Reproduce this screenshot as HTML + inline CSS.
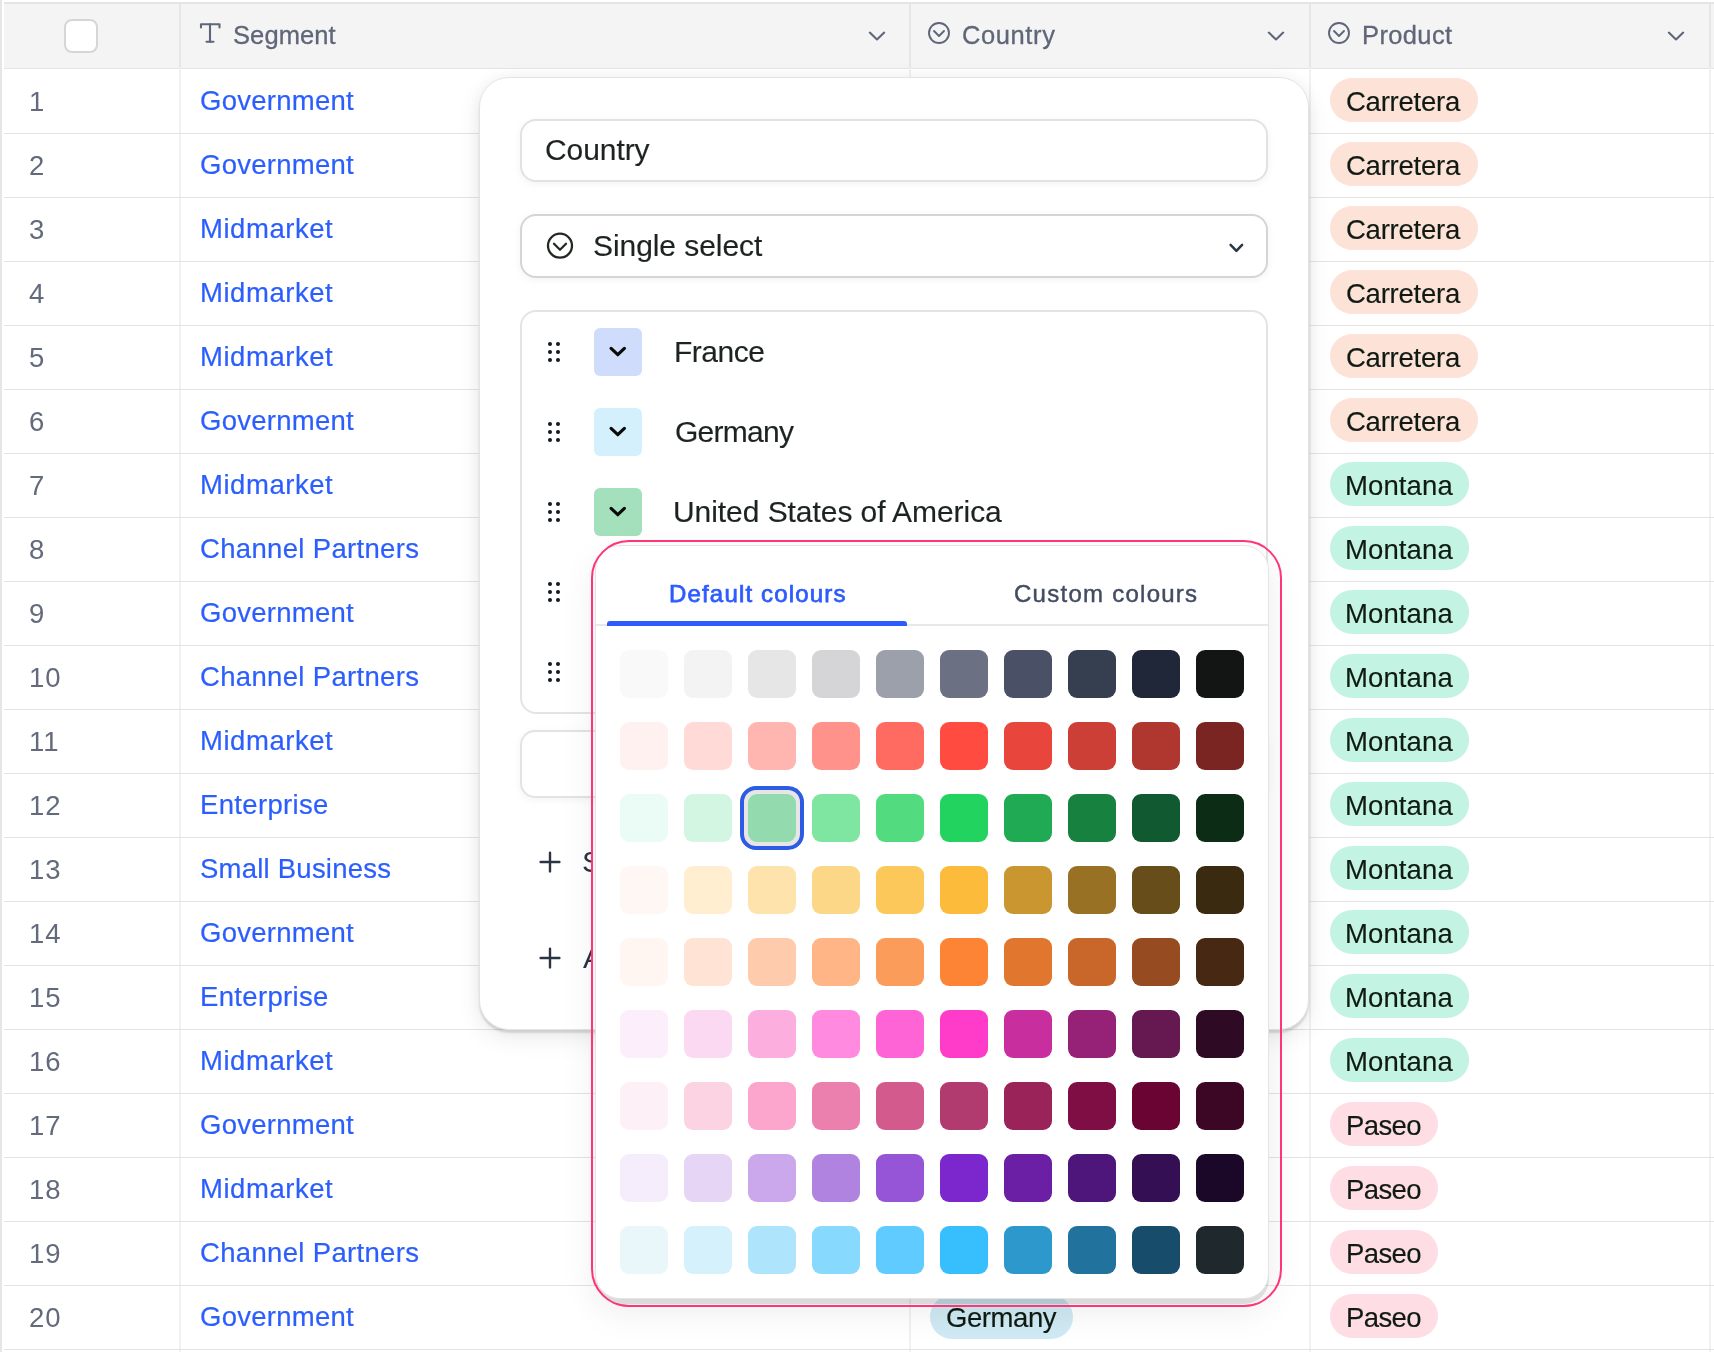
<!DOCTYPE html>
<html><head><meta charset="utf-8">
<style>
*{box-sizing:border-box;margin:0;padding:0}
html,body{width:1714px;height:1352px;overflow:hidden;background:#fff;font-family:"Liberation Sans",sans-serif}
.abs{position:absolute}
.vdiv{position:absolute;top:4px;width:2px;height:1348px;background:#f1f1f1}
.vdivh{position:absolute;top:4px;width:2px;height:64px;background:#e6e6e6}
.rowl{position:absolute;left:4px;width:1710px;height:1px;background:#e4e4e4}
.t{position:absolute;white-space:nowrap;line-height:1;will-change:transform}
.num{left:29px;font-size:27.5px;color:#626a7c;letter-spacing:1px}
.seg{left:200px;font-size:27.5px;color:#2b5efd;letter-spacing:0.35px;-webkit-text-stroke:0.2px #2b5efd}
.hdt{font-size:25.5px;color:#5e6678;letter-spacing:0.35px;-webkit-text-stroke:0.3px #5e6678}
.pill{position:absolute;height:44px;border-radius:22px}
.pt{position:absolute;white-space:nowrap;line-height:1;will-change:transform;font-size:27.5px;color:#0f1a12;letter-spacing:-0.2px;-webkit-text-stroke:0.15px #0f1a12}
.sw{position:absolute;width:48px;height:48px;border-radius:9px}
</style></head><body>

<div class="abs" style="left:0;top:0;width:2px;height:1352px;background:#e6e6e6"></div>
<div class="abs" style="left:4px;top:2px;width:1710px;height:2px;background:#e5e5e5"></div>
<div class="abs" style="left:4px;top:4px;width:1710px;height:64px;background:#f4f4f4"></div>
<div class="abs" style="left:4px;top:68px;width:1710px;height:1px;background:#e5e5e5"></div>
<div class="vdiv" style="left:179px"></div><div class="vdivh" style="left:179px"></div>
<div class="vdiv" style="left:909px"></div><div class="vdivh" style="left:909px"></div>
<div class="vdiv" style="left:1309px"></div><div class="vdivh" style="left:1309px"></div>
<div class="vdiv" style="left:1709px"></div><div class="vdivh" style="left:1709px"></div>
<div class="rowl" style="top:133px"></div>
<div class="rowl" style="top:197px"></div>
<div class="rowl" style="top:261px"></div>
<div class="rowl" style="top:325px"></div>
<div class="rowl" style="top:389px"></div>
<div class="rowl" style="top:453px"></div>
<div class="rowl" style="top:517px"></div>
<div class="rowl" style="top:581px"></div>
<div class="rowl" style="top:645px"></div>
<div class="rowl" style="top:709px"></div>
<div class="rowl" style="top:773px"></div>
<div class="rowl" style="top:837px"></div>
<div class="rowl" style="top:901px"></div>
<div class="rowl" style="top:965px"></div>
<div class="rowl" style="top:1029px"></div>
<div class="rowl" style="top:1093px"></div>
<div class="rowl" style="top:1157px"></div>
<div class="rowl" style="top:1221px"></div>
<div class="rowl" style="top:1285px"></div>
<div class="rowl" style="top:1349px"></div>
<div class="abs" style="left:64px;top:19px;width:34px;height:34px;border:2px solid #d6d6da;border-radius:8px;background:#fff"></div>
<svg class="abs" style="left:198px;top:21px" width="24" height="24" viewBox="0 0 24 24" fill="none" stroke="#5e6678" stroke-width="2.1" stroke-linecap="round" stroke-linejoin="round"><path d="M3 6.5V3.2H21.5V6.5"/><path d="M12 3.2V20.8"/><path d="M8.5 20.8H15.5"/></svg>
<div class="t hdt" style="left:233px;top:23.4px;letter-spacing:0.1px">Segment</div>
<svg class="abs" style="left:867px;top:30px" width="20" height="12" viewBox="0 0 20 12" fill="none" stroke="#5e6678" stroke-width="2.1" stroke-linecap="round" stroke-linejoin="round"><path d="M2.8 2.6L10 9.4L17.2 2.6"/></svg>
<svg class="abs" style="left:927px;top:21px" width="24" height="24" viewBox="0 0 24 24" fill="none" stroke="#5e6678" stroke-width="1.9" stroke-linecap="round" stroke-linejoin="round"><circle cx="12" cy="12" r="10"/><path d="M7 10L12 15L17 10"/></svg>
<div class="t hdt" style="left:962px;top:23.4px;letter-spacing:0.6px">Country</div>
<svg class="abs" style="left:1266px;top:30px" width="20" height="12" viewBox="0 0 20 12" fill="none" stroke="#5e6678" stroke-width="2.1" stroke-linecap="round" stroke-linejoin="round"><path d="M2.8 2.6L10 9.4L17.2 2.6"/></svg>
<svg class="abs" style="left:1327px;top:21px" width="24" height="24" viewBox="0 0 24 24" fill="none" stroke="#5e6678" stroke-width="1.9" stroke-linecap="round" stroke-linejoin="round"><circle cx="12" cy="12" r="10"/><path d="M7 10L12 15L17 10"/></svg>
<div class="t hdt" style="left:1362px;top:23.4px;letter-spacing:0.37px">Product</div>
<svg class="abs" style="left:1666px;top:30px" width="20" height="12" viewBox="0 0 20 12" fill="none" stroke="#5e6678" stroke-width="2.1" stroke-linecap="round" stroke-linejoin="round"><path d="M2.8 2.6L10 9.4L17.2 2.6"/></svg>
<div class="t num" style="top:88px">1</div>
<div class="t seg" style="left:199.7px;top:87.1px;letter-spacing:0.26px">Government</div>
<div class="pill" style="left:1330px;top:78px;width:148px;background:#fde2d8"></div>
<div class="t pt" style="left:1346.2px;top:87.8px;letter-spacing:-0.24px">Carretera</div>
<div class="t num" style="top:152px">2</div>
<div class="t seg" style="left:199.7px;top:151.1px;letter-spacing:0.26px">Government</div>
<div class="pill" style="left:1330px;top:142px;width:148px;background:#fde2d8"></div>
<div class="t pt" style="left:1346.2px;top:151.8px;letter-spacing:-0.24px">Carretera</div>
<div class="t num" style="top:216px">3</div>
<div class="t seg" style="left:199.7px;top:215.1px;letter-spacing:0.55px">Midmarket</div>
<div class="pill" style="left:1330px;top:206px;width:148px;background:#fde2d8"></div>
<div class="t pt" style="left:1346.2px;top:215.8px;letter-spacing:-0.24px">Carretera</div>
<div class="t num" style="top:280px">4</div>
<div class="t seg" style="left:199.7px;top:279.1px;letter-spacing:0.55px">Midmarket</div>
<div class="pill" style="left:1330px;top:270px;width:148px;background:#fde2d8"></div>
<div class="t pt" style="left:1346.2px;top:279.8px;letter-spacing:-0.24px">Carretera</div>
<div class="t num" style="top:344px">5</div>
<div class="t seg" style="left:199.7px;top:343.1px;letter-spacing:0.55px">Midmarket</div>
<div class="pill" style="left:1330px;top:334px;width:148px;background:#fde2d8"></div>
<div class="t pt" style="left:1346.2px;top:343.8px;letter-spacing:-0.24px">Carretera</div>
<div class="t num" style="top:408px">6</div>
<div class="t seg" style="left:199.7px;top:407.1px;letter-spacing:0.26px">Government</div>
<div class="pill" style="left:1330px;top:398px;width:148px;background:#fde2d8"></div>
<div class="t pt" style="left:1346.2px;top:407.8px;letter-spacing:-0.24px">Carretera</div>
<div class="t num" style="top:472px">7</div>
<div class="t seg" style="left:199.7px;top:471.1px;letter-spacing:0.55px">Midmarket</div>
<div class="pill" style="left:1330px;top:462px;width:139px;background:#c3f3e3"></div>
<div class="t pt" style="left:1345px;top:471.8px;letter-spacing:0.12px">Montana</div>
<div class="t num" style="top:536px">8</div>
<div class="t seg" style="left:200.1px;top:535.1px;letter-spacing:0.33px">Channel Partners</div>
<div class="pill" style="left:1330px;top:526px;width:139px;background:#c3f3e3"></div>
<div class="t pt" style="left:1345px;top:535.8px;letter-spacing:0.12px">Montana</div>
<div class="t num" style="top:600px">9</div>
<div class="t seg" style="left:199.7px;top:599.1px;letter-spacing:0.26px">Government</div>
<div class="pill" style="left:1330px;top:590px;width:139px;background:#c3f3e3"></div>
<div class="t pt" style="left:1345px;top:599.8px;letter-spacing:0.12px">Montana</div>
<div class="t num" style="top:664px">10</div>
<div class="t seg" style="left:200.1px;top:663.1px;letter-spacing:0.33px">Channel Partners</div>
<div class="pill" style="left:1330px;top:654px;width:139px;background:#c3f3e3"></div>
<div class="t pt" style="left:1345px;top:663.8px;letter-spacing:0.12px">Montana</div>
<div class="t num" style="top:728px">11</div>
<div class="t seg" style="left:199.7px;top:727.1px;letter-spacing:0.55px">Midmarket</div>
<div class="pill" style="left:1330px;top:718px;width:139px;background:#c3f3e3"></div>
<div class="t pt" style="left:1345px;top:727.8px;letter-spacing:0.12px">Montana</div>
<div class="t num" style="top:792px">12</div>
<div class="t seg" style="left:199.7px;top:791.1px;letter-spacing:0.33px">Enterprise</div>
<div class="pill" style="left:1330px;top:782px;width:139px;background:#c3f3e3"></div>
<div class="t pt" style="left:1345px;top:791.8px;letter-spacing:0.12px">Montana</div>
<div class="t num" style="top:856px">13</div>
<div class="t seg" style="left:200.0px;top:855.1px;letter-spacing:0.23px">Small Business</div>
<div class="pill" style="left:1330px;top:846px;width:139px;background:#c3f3e3"></div>
<div class="t pt" style="left:1345px;top:855.8px;letter-spacing:0.12px">Montana</div>
<div class="t num" style="top:920px">14</div>
<div class="t seg" style="left:199.7px;top:919.1px;letter-spacing:0.26px">Government</div>
<div class="pill" style="left:1330px;top:910px;width:139px;background:#c3f3e3"></div>
<div class="t pt" style="left:1345px;top:919.8px;letter-spacing:0.12px">Montana</div>
<div class="t num" style="top:984px">15</div>
<div class="t seg" style="left:199.7px;top:983.1px;letter-spacing:0.33px">Enterprise</div>
<div class="pill" style="left:1330px;top:974px;width:139px;background:#c3f3e3"></div>
<div class="t pt" style="left:1345px;top:983.8px;letter-spacing:0.12px">Montana</div>
<div class="t num" style="top:1048px">16</div>
<div class="t seg" style="left:199.7px;top:1047.1px;letter-spacing:0.55px">Midmarket</div>
<div class="pill" style="left:1330px;top:1038px;width:139px;background:#c3f3e3"></div>
<div class="t pt" style="left:1345px;top:1047.8px;letter-spacing:0.12px">Montana</div>
<div class="t num" style="top:1112px">17</div>
<div class="t seg" style="left:199.7px;top:1111.1px;letter-spacing:0.26px">Government</div>
<div class="pill" style="left:1330px;top:1102px;width:108px;background:#ffdde4"></div>
<div class="t pt" style="left:1345.9px;top:1111.8px;letter-spacing:-0.62px">Paseo</div>
<div class="t num" style="top:1176px">18</div>
<div class="t seg" style="left:199.7px;top:1175.1px;letter-spacing:0.55px">Midmarket</div>
<div class="pill" style="left:1330px;top:1166px;width:108px;background:#ffdde4"></div>
<div class="t pt" style="left:1345.9px;top:1175.8px;letter-spacing:-0.62px">Paseo</div>
<div class="t num" style="top:1240px">19</div>
<div class="t seg" style="left:200.1px;top:1239.1px;letter-spacing:0.33px">Channel Partners</div>
<div class="pill" style="left:1330px;top:1230px;width:108px;background:#ffdde4"></div>
<div class="t pt" style="left:1345.9px;top:1239.8px;letter-spacing:-0.62px">Paseo</div>
<div class="t num" style="top:1304px">20</div>
<div class="t seg" style="left:199.7px;top:1303.1px;letter-spacing:0.26px">Government</div>
<div class="pill" style="left:1330px;top:1294px;width:108px;background:#ffdde4"></div>
<div class="t pt" style="left:1345.9px;top:1303.8px;letter-spacing:-0.62px">Paseo</div>
<div class="pill" style="left:930px;top:1295px;width:143px;background:#cfeaf4"></div>
<div class="t pt" style="left:946.4px;top:1303.8px;letter-spacing:-0.43px">Germany</div>
<div class="abs" style="left:479px;top:77px;width:830px;height:953px;border:1.2px solid #e4e4e4;border-radius:30px;background:#fff;box-shadow:0 3px 2px rgba(0,0,0,0.12),0 8px 24px rgba(0,0,0,0.08),0 0 18px rgba(0,0,0,0.05)"></div>
<div class="abs" style="left:520px;top:119px;width:748px;height:63px;border:2px solid #e2e2e2;border-radius:16px;background:#fff;box-shadow:0 2px 8px rgba(0,0,0,0.05)"></div>
<div class="t" style="left:544.5px;top:134.8px;font-size:30px;color:#1c2321;-webkit-text-stroke:0.15px #1c2321;letter-spacing:-0.08px">Country</div>
<div class="abs" style="left:520px;top:214px;width:748px;height:64px;border:2px solid #d5d5d5;border-radius:16px;background:#fff;box-shadow:0 2px 8px rgba(0,0,0,0.05)"></div>
<svg class="abs" style="left:540px;top:226px" width="40" height="40" viewBox="0 0 40 40" fill="none" stroke="#222822" stroke-width="2.3" stroke-linecap="round" stroke-linejoin="round"><circle cx="20" cy="19.7" r="12"/><path d="M14 17.8L20 23.7L26 17.8"/></svg>
<div class="t" style="left:592.5px;top:230.7px;font-size:30px;color:#1c2321;-webkit-text-stroke:0.15px #1c2321;letter-spacing:-0.07px">Single select</div>
<svg class="abs" style="left:1220px;top:232px" width="32" height="32" viewBox="0 0 32 32" fill="none" stroke="#2a3547" stroke-width="2.5" stroke-linecap="round" stroke-linejoin="round"><path d="M10.6 12.9L16.4 18.8L22.1 12.9"/></svg>
<div class="abs" style="left:520px;top:310px;width:748px;height:404px;border:2px solid #e4e4e4;border-radius:16px;background:#fff"></div>
<div class="abs" style="left:548px;top:342px;width:4px;height:4px;border-radius:2px;background:#111a1c"></div><div class="abs" style="left:556px;top:342px;width:4px;height:4px;border-radius:2px;background:#111a1c"></div><div class="abs" style="left:548px;top:350px;width:4px;height:4px;border-radius:2px;background:#111a1c"></div><div class="abs" style="left:556px;top:350px;width:4px;height:4px;border-radius:2px;background:#111a1c"></div><div class="abs" style="left:548px;top:358px;width:4px;height:4px;border-radius:2px;background:#111a1c"></div><div class="abs" style="left:556px;top:358px;width:4px;height:4px;border-radius:2px;background:#111a1c"></div>
<div class="abs" style="left:594px;top:328px;width:48px;height:48px;border-radius:6px;background:#d0dcfb"></div>
<svg class="abs" style="left:590px;top:324px" width="56" height="56" viewBox="0 0 56 56" fill="none" stroke="#0a0a0a" stroke-width="3.2" stroke-linecap="round" stroke-linejoin="round"><path d="M21.1 24.4L27.8 30.7L34.4 24.4"/></svg>
<div class="t" style="left:674px;top:336.6px;font-size:30px;color:#1c2321;-webkit-text-stroke:0.15px #1c2321;letter-spacing:-0.48px">France</div>
<div class="abs" style="left:548px;top:422px;width:4px;height:4px;border-radius:2px;background:#111a1c"></div><div class="abs" style="left:556px;top:422px;width:4px;height:4px;border-radius:2px;background:#111a1c"></div><div class="abs" style="left:548px;top:430px;width:4px;height:4px;border-radius:2px;background:#111a1c"></div><div class="abs" style="left:556px;top:430px;width:4px;height:4px;border-radius:2px;background:#111a1c"></div><div class="abs" style="left:548px;top:438px;width:4px;height:4px;border-radius:2px;background:#111a1c"></div><div class="abs" style="left:556px;top:438px;width:4px;height:4px;border-radius:2px;background:#111a1c"></div>
<div class="abs" style="left:594px;top:408px;width:48px;height:48px;border-radius:6px;background:#d3f0fc"></div>
<svg class="abs" style="left:590px;top:404px" width="56" height="56" viewBox="0 0 56 56" fill="none" stroke="#0a0a0a" stroke-width="3.2" stroke-linecap="round" stroke-linejoin="round"><path d="M21.1 24.4L27.8 30.7L34.4 24.4"/></svg>
<div class="t" style="left:674.6px;top:416.6px;font-size:30px;color:#1c2321;-webkit-text-stroke:0.15px #1c2321;letter-spacing:-0.72px">Germany</div>
<div class="abs" style="left:548px;top:502px;width:4px;height:4px;border-radius:2px;background:#111a1c"></div><div class="abs" style="left:556px;top:502px;width:4px;height:4px;border-radius:2px;background:#111a1c"></div><div class="abs" style="left:548px;top:510px;width:4px;height:4px;border-radius:2px;background:#111a1c"></div><div class="abs" style="left:556px;top:510px;width:4px;height:4px;border-radius:2px;background:#111a1c"></div><div class="abs" style="left:548px;top:518px;width:4px;height:4px;border-radius:2px;background:#111a1c"></div><div class="abs" style="left:556px;top:518px;width:4px;height:4px;border-radius:2px;background:#111a1c"></div>
<div class="abs" style="left:594px;top:488px;width:48px;height:48px;border-radius:6px;background:#a3e0bb"></div>
<svg class="abs" style="left:590px;top:484px" width="56" height="56" viewBox="0 0 56 56" fill="none" stroke="#0a0a0a" stroke-width="3.2" stroke-linecap="round" stroke-linejoin="round"><path d="M21.1 24.4L27.8 30.7L34.4 24.4"/></svg>
<div class="t" style="left:673.2px;top:496.6px;font-size:30px;color:#1c2321;-webkit-text-stroke:0.15px #1c2321;letter-spacing:-0.06px">United States of America</div>
<div class="abs" style="left:548px;top:582px;width:4px;height:4px;border-radius:2px;background:#111a1c"></div><div class="abs" style="left:556px;top:582px;width:4px;height:4px;border-radius:2px;background:#111a1c"></div><div class="abs" style="left:548px;top:590px;width:4px;height:4px;border-radius:2px;background:#111a1c"></div><div class="abs" style="left:556px;top:590px;width:4px;height:4px;border-radius:2px;background:#111a1c"></div><div class="abs" style="left:548px;top:598px;width:4px;height:4px;border-radius:2px;background:#111a1c"></div><div class="abs" style="left:556px;top:598px;width:4px;height:4px;border-radius:2px;background:#111a1c"></div>
<div class="abs" style="left:594px;top:568px;width:48px;height:48px;border-radius:6px;background:#ffffff"></div>
<svg class="abs" style="left:590px;top:564px" width="56" height="56" viewBox="0 0 56 56" fill="none" stroke="#0a0a0a" stroke-width="3.2" stroke-linecap="round" stroke-linejoin="round"><path d="M21.1 24.4L27.8 30.7L34.4 24.4"/></svg>
<div class="t" style="left:673.2px;top:576.6px;font-size:30px;color:#1c2321;-webkit-text-stroke:0.15px #1c2321;letter-spacing:0px">Italy</div>
<div class="abs" style="left:548px;top:662px;width:4px;height:4px;border-radius:2px;background:#111a1c"></div><div class="abs" style="left:556px;top:662px;width:4px;height:4px;border-radius:2px;background:#111a1c"></div><div class="abs" style="left:548px;top:670px;width:4px;height:4px;border-radius:2px;background:#111a1c"></div><div class="abs" style="left:556px;top:670px;width:4px;height:4px;border-radius:2px;background:#111a1c"></div><div class="abs" style="left:548px;top:678px;width:4px;height:4px;border-radius:2px;background:#111a1c"></div><div class="abs" style="left:556px;top:678px;width:4px;height:4px;border-radius:2px;background:#111a1c"></div>
<div class="abs" style="left:594px;top:648px;width:48px;height:48px;border-radius:6px;background:#ffffff"></div>
<svg class="abs" style="left:590px;top:644px" width="56" height="56" viewBox="0 0 56 56" fill="none" stroke="#0a0a0a" stroke-width="3.2" stroke-linecap="round" stroke-linejoin="round"><path d="M21.1 24.4L27.8 30.7L34.4 24.4"/></svg>
<div class="t" style="left:673.2px;top:656.6px;font-size:30px;color:#1c2321;-webkit-text-stroke:0.15px #1c2321;letter-spacing:0px">Spain</div>
<div class="abs" style="left:520px;top:730px;width:748px;height:68px;border:2px solid #e3e3e3;border-radius:15px;background:#fff;box-shadow:0 2px 8px rgba(0,0,0,0.05)"></div>
<svg class="abs" style="left:538px;top:850px" width="24" height="24" viewBox="0 0 24 24" fill="none" stroke="#2b3445" stroke-width="2.4" stroke-linecap="round"><path d="M12 2.6V21.4M2.6 12H21.4"/></svg>
<div class="abs" style="left:570px;top:830px;width:22px;height:150px;overflow:hidden"><div class="t" style="left:12px;top:16.8px;font-size:30px;color:#2b3445">Sort options</div><div class="t" style="left:12.5px;top:112.8px;font-size:30px;color:#2b3445">Add option</div></div>
<svg class="abs" style="left:538px;top:946px" width="24" height="24" viewBox="0 0 24 24" fill="none" stroke="#2b3445" stroke-width="2.4" stroke-linecap="round"><path d="M12 2.6V21.4M2.6 12H21.4"/></svg>
<div class="abs" style="left:595px;top:545px;width:674px;height:754px;border:1.5px solid #e4e4e4;border-radius:25px;background:#fff;box-shadow:0 5px 0 rgba(0,0,0,0.10),0 12px 36px rgba(0,0,0,0.08)"></div>
<div class="t" style="left:668.9px;top:581.8px;font-size:24px;color:#2d5bff;letter-spacing:1.17px;-webkit-text-stroke:0.75px #2d5bff">Default colours</div>
<div class="t" style="left:1014.3px;top:581.8px;font-size:24px;color:#434c63;letter-spacing:1.26px;-webkit-text-stroke:0.45px #434c63">Custom colours</div>
<div class="abs" style="left:596px;top:624px;width:672px;height:2px;background:#e8e8e8"></div>
<div class="abs" style="left:607px;top:621px;width:300px;height:5px;border-radius:3px 3px 0 0;background:#2d5bff"></div>
<div class="sw" style="left:620px;top:650px;background:#f9f9f9"></div>
<div class="sw" style="left:684px;top:650px;background:#f3f3f3"></div>
<div class="sw" style="left:748px;top:650px;background:#e6e6e6"></div>
<div class="sw" style="left:812px;top:650px;background:#d5d5d8"></div>
<div class="sw" style="left:876px;top:650px;background:#9ca0ab"></div>
<div class="sw" style="left:940px;top:650px;background:#6b7082"></div>
<div class="sw" style="left:1004px;top:650px;background:#4a5066"></div>
<div class="sw" style="left:1068px;top:650px;background:#363f50"></div>
<div class="sw" style="left:1132px;top:650px;background:#1f2738"></div>
<div class="sw" style="left:1196px;top:650px;background:#131515"></div>
<div class="sw" style="left:620px;top:722px;background:#fff1f0"></div>
<div class="sw" style="left:684px;top:722px;background:#ffdad7"></div>
<div class="sw" style="left:748px;top:722px;background:#ffb5b0"></div>
<div class="sw" style="left:812px;top:722px;background:#ff938b"></div>
<div class="sw" style="left:876px;top:722px;background:#ff6b61"></div>
<div class="sw" style="left:940px;top:722px;background:#ff4b40"></div>
<div class="sw" style="left:1004px;top:722px;background:#e8453d"></div>
<div class="sw" style="left:1068px;top:722px;background:#cc3f36"></div>
<div class="sw" style="left:1132px;top:722px;background:#b03630"></div>
<div class="sw" style="left:1196px;top:722px;background:#7a2521"></div>
<div class="sw" style="left:620px;top:794px;background:#ebfbf6"></div>
<div class="sw" style="left:684px;top:794px;background:#d3f6e2"></div>
<div class="abs" style="left:740px;top:786px;width:64px;height:64px;border:4px solid #2d5be3;border-radius:16px;background:#e6e6e6"></div>
<div class="sw" style="left:748px;top:794px;background:#93dbae"></div>
<div class="sw" style="left:812px;top:794px;background:#7ee6a0"></div>
<div class="sw" style="left:876px;top:794px;background:#52dc7f"></div>
<div class="sw" style="left:940px;top:794px;background:#22d35f"></div>
<div class="sw" style="left:1004px;top:794px;background:#20aa53"></div>
<div class="sw" style="left:1068px;top:794px;background:#178240"></div>
<div class="sw" style="left:1132px;top:794px;background:#115930"></div>
<div class="sw" style="left:1196px;top:794px;background:#0d2c16"></div>
<div class="sw" style="left:620px;top:866px;background:#fff7f3"></div>
<div class="sw" style="left:684px;top:866px;background:#ffeecf"></div>
<div class="sw" style="left:748px;top:866px;background:#ffe3ad"></div>
<div class="sw" style="left:812px;top:866px;background:#fdd788"></div>
<div class="sw" style="left:876px;top:866px;background:#fdc85a"></div>
<div class="sw" style="left:940px;top:866px;background:#fdbb3b"></div>
<div class="sw" style="left:1004px;top:866px;background:#c99630"></div>
<div class="sw" style="left:1068px;top:866px;background:#997124"></div>
<div class="sw" style="left:1132px;top:866px;background:#664d1a"></div>
<div class="sw" style="left:1196px;top:866px;background:#3a2a10"></div>
<div class="sw" style="left:620px;top:938px;background:#fff6f2"></div>
<div class="sw" style="left:684px;top:938px;background:#ffe3d4"></div>
<div class="sw" style="left:748px;top:938px;background:#ffcbad"></div>
<div class="sw" style="left:812px;top:938px;background:#ffb585"></div>
<div class="sw" style="left:876px;top:938px;background:#fb9c5a"></div>
<div class="sw" style="left:940px;top:938px;background:#fd8435"></div>
<div class="sw" style="left:1004px;top:938px;background:#e1762e"></div>
<div class="sw" style="left:1068px;top:938px;background:#c96629"></div>
<div class="sw" style="left:1132px;top:938px;background:#964c20"></div>
<div class="sw" style="left:1196px;top:938px;background:#472812"></div>
<div class="sw" style="left:620px;top:1010px;background:#fdeefb"></div>
<div class="sw" style="left:684px;top:1010px;background:#fcd9f3"></div>
<div class="sw" style="left:748px;top:1010px;background:#fcaedf"></div>
<div class="sw" style="left:812px;top:1010px;background:#ff8ae0"></div>
<div class="sw" style="left:876px;top:1010px;background:#ff64d6"></div>
<div class="sw" style="left:940px;top:1010px;background:#ff3bc9"></div>
<div class="sw" style="left:1004px;top:1010px;background:#c92e9f"></div>
<div class="sw" style="left:1068px;top:1010px;background:#952277"></div>
<div class="sw" style="left:1132px;top:1010px;background:#661850"></div>
<div class="sw" style="left:1196px;top:1010px;background:#2e0a24"></div>
<div class="sw" style="left:620px;top:1082px;background:#fef0f7"></div>
<div class="sw" style="left:684px;top:1082px;background:#fcd3e2"></div>
<div class="sw" style="left:748px;top:1082px;background:#fca6ce"></div>
<div class="sw" style="left:812px;top:1082px;background:#eb7fae"></div>
<div class="sw" style="left:876px;top:1082px;background:#d25a8c"></div>
<div class="sw" style="left:940px;top:1082px;background:#b13b6f"></div>
<div class="sw" style="left:1004px;top:1082px;background:#9a2359"></div>
<div class="sw" style="left:1068px;top:1082px;background:#7e0e43"></div>
<div class="sw" style="left:1132px;top:1082px;background:#6a0533"></div>
<div class="sw" style="left:1196px;top:1082px;background:#3b0725"></div>
<div class="sw" style="left:620px;top:1154px;background:#f5ecfc"></div>
<div class="sw" style="left:684px;top:1154px;background:#e6d5f5"></div>
<div class="sw" style="left:748px;top:1154px;background:#cba8eb"></div>
<div class="sw" style="left:812px;top:1154px;background:#b083e0"></div>
<div class="sw" style="left:876px;top:1154px;background:#9654d6"></div>
<div class="sw" style="left:940px;top:1154px;background:#7c26ce"></div>
<div class="sw" style="left:1004px;top:1154px;background:#6a1fa4"></div>
<div class="sw" style="left:1068px;top:1154px;background:#4e167a"></div>
<div class="sw" style="left:1132px;top:1154px;background:#350f54"></div>
<div class="sw" style="left:1196px;top:1154px;background:#1b0829"></div>
<div class="sw" style="left:620px;top:1226px;background:#eaf7fa"></div>
<div class="sw" style="left:684px;top:1226px;background:#d5f1fc"></div>
<div class="sw" style="left:748px;top:1226px;background:#aee5fc"></div>
<div class="sw" style="left:812px;top:1226px;background:#88d9fe"></div>
<div class="sw" style="left:876px;top:1226px;background:#60cbfe"></div>
<div class="sw" style="left:940px;top:1226px;background:#37befd"></div>
<div class="sw" style="left:1004px;top:1226px;background:#2d98cc"></div>
<div class="sw" style="left:1068px;top:1226px;background:#21729c"></div>
<div class="sw" style="left:1132px;top:1226px;background:#184c6b"></div>
<div class="sw" style="left:1196px;top:1226px;background:#1e282d"></div>
<div class="abs" style="left:591px;top:540px;width:691px;height:767px;border:2px solid #ff3575;border-radius:38px"></div>
</body></html>
